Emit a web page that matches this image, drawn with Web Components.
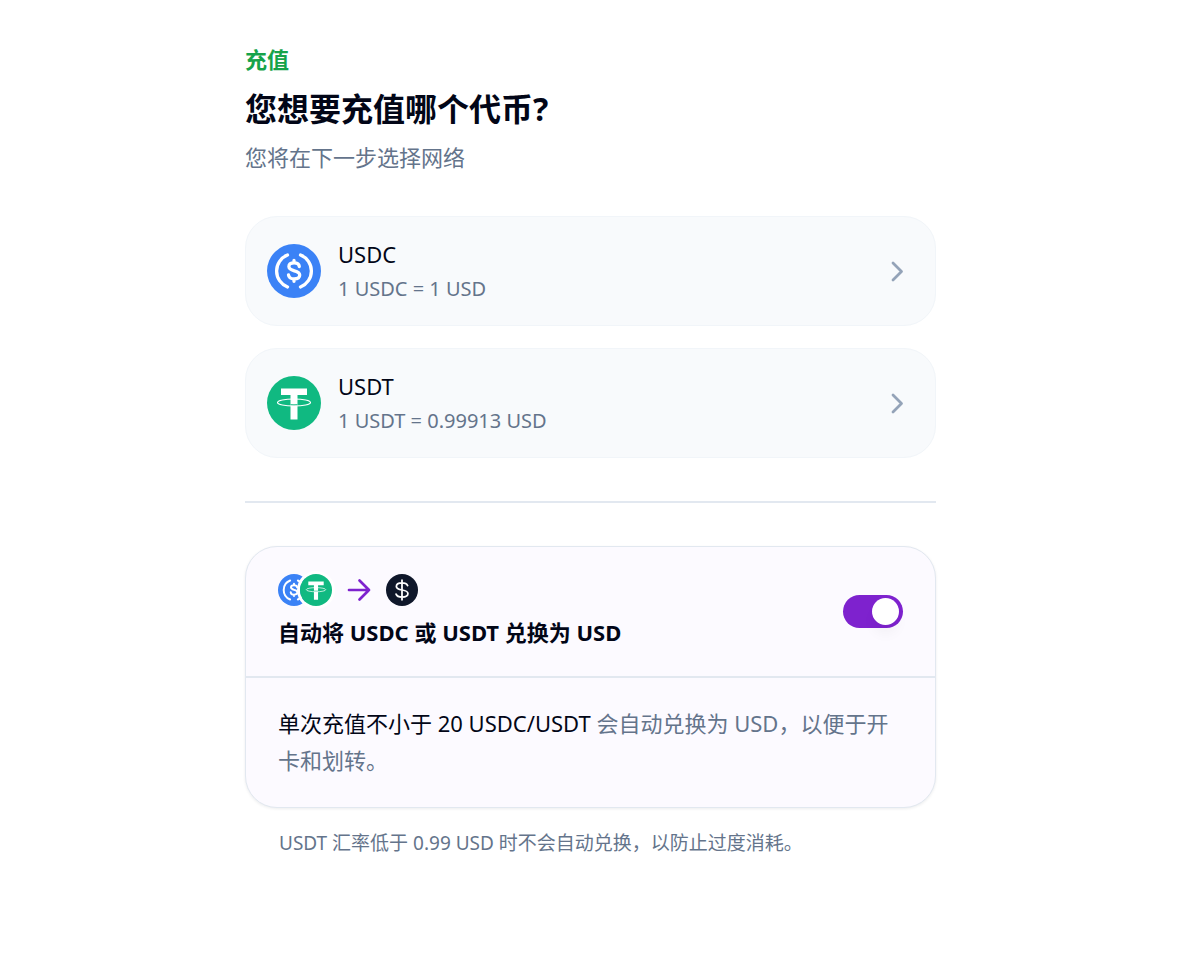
<!DOCTYPE html>
<html lang="zh-CN">
<head>
<meta charset="utf-8">
<meta name="viewport" content="width=device-width, initial-scale=1">
<title>充值</title>
<style>
  :root {
    --ink: #020617;
    --muted: #64748b;
    --line: #e2e8f0;
    --purple: #7e22ce;
  }
  body {
    margin: 0;
    padding-right: 20px;
    background: #fff;
    color: var(--ink);
    font-family: "Noto Sans", "Noto Sans CJK SC", sans-serif;
    font-size: 22px;
    line-height: 32px;
  }
</style>
</head>
<body>
<deposit-page></deposit-page>

<script>
const ICONS = {
  usdc: `
    <circle cx="27" cy="27" r="27" fill="#3b82f6"/>
    <g fill="none" stroke="#fff" stroke-width="3.3" stroke-linecap="round">
      <path d="M20.500 11a17.200 17.200 0 0 0 0 32M33.500 11a17.200 17.200 0 0 1 0 32"/>
      <path d="M32.300 22.500c-.3-2.500-2.300-3.600-5.200-3.600-3.200 0-5.200 1.300-5.200 3.600 0 5.700 10.800 2.900 10.800 8.500 0 2.600-2.200 3.900-5.600 3.900-3.300 0-5.300-1.300-5.600-4M27 16.500v2.400M27 34.900v2.400"/>
    </g>`,
  usdt: `
    <circle cx="27" cy="27" r="27" fill="#10b981"/>
    <path fill="#fff" d="M14 12.500h26v6.500h-9.500v24.500h-7V19H14z"/>
    <ellipse cx="27" cy="26.500" rx="16.500" ry="3.500" fill="none" stroke="#fff" stroke-width="1.2"/>
    <path d="M23.500 28.700q3.500.3 7 0" fill="none" stroke="#10b981" stroke-width="1"/>`,
  usd: `
    <circle cx="27" cy="27" r="27" fill="#0f172a"/>
    <path d="M36.500 19.500c-1.500-3.300-5-4.500-9.500-4.500-5.500 0-9.500 1.800-9.500 6 0 8.500 19.500 3.500 19.500 12 0 4.300-4.500 6-10 6-5 0-8.800-1.700-10-5M27 10.500v33" fill="none" stroke="#fff" stroke-width="3" stroke-linecap="round"/>`
};

class CoinIcon extends HTMLElement {
  constructor() {
    super();
    this.attachShadow({ mode: 'open' });
  }

  connectedCallback() {
    this.shadowRoot.innerHTML = `
      <style>
        :host {
          display: block;
          flex: none;
          width: var(--coin-size, 54px);
          height: var(--coin-size, 54px);
          border-radius: 50%;
        }
        svg {
          display: block;
          width: 100%;
          height: 100%;
        }
      </style>
      <svg viewBox="0 0 54 54" aria-hidden="true">${ICONS[this.getAttribute('name')]}</svg>
    `;
  }
}

class TokenOption extends HTMLElement {
  constructor() {
    super();
    this.attachShadow({ mode: 'open' });
    this.shadowRoot.innerHTML = `
      <style>
        :host {
          display: block;
        }
        button {
          display: flex;
          align-items: center;
          gap: 17px;
          width: 100%;
          min-height: 110px;
          box-sizing: border-box;
          padding: 20px 21px;
          border: 1px solid #f1f5f9;
          border-radius: 32px;
          background: #f8fafc;
          color: inherit;
          font: inherit;
          text-align: left;
          cursor: pointer;
        }
        .text {
          flex: 1;
        }
        .text span {
          display: block;
        }
        .rate {
          margin-top: 3px;
          color: var(--muted);
          font-size: 20px;
        }
        .chevron {
          flex: none;
          width: 34px;
          height: 34px;
        }
      </style>
      <button type="button">
        <slot name="icon"></slot>
        <span class="text">
          <span><slot></slot></span>
          <span class="rate"><slot name="rate"></slot></span>
        </span>
        <svg class="chevron" viewBox="0 0 34 34" aria-hidden="true">
          <path d="M13 9l8.500 8.500L13 26" fill="none" stroke="#94a3b8" stroke-width="2.800" stroke-linecap="round" stroke-linejoin="round"/>
        </svg>
      </button>
    `;
  }
}

class ToggleSwitch extends HTMLElement {
  constructor() {
    super();
    this.attachShadow({ mode: 'open' });
  }

  connectedCallback() {
    this.shadowRoot.innerHTML = `
      <style>
        :host {
          display: block;
          flex: none;
        }
        input {
          appearance: none;
          display: flex;
          align-items: center;
          width: 60px;
          height: 33px;
          box-sizing: border-box;
          margin: 0;
          padding: 0 4px;
          border-radius: 17px;
          background: var(--line);
          cursor: pointer;
        }
        input::before {
          content: "";
          width: 27px;
          height: 27px;
          border-radius: 50%;
          background: #fff;
          box-shadow: 0 10px 15px -3px rgba(0, 0, 0, 0.06);
        }
        input:checked {
          justify-content: flex-end;
          background: var(--purple);
        }
      </style>
      <input type="checkbox" role="switch" aria-label="${this.getAttribute('label')}" checked>
    `;
  }
}

class ConvertCard extends HTMLElement {
  constructor() {
    super();
    this.attachShadow({ mode: 'open' });
    this.shadowRoot.innerHTML = `
      <style>
        :host {
          display: block;
          border: 1px solid var(--line);
          border-radius: 32px;
          background: #fcfaff;
          box-shadow: 0 1px 3px rgba(15, 23, 42, 0.08);
        }
        .head {
          display: flex;
          align-items: center;
          justify-content: space-between;
          padding: 27px 32px 28px;
          border-bottom: 2px solid var(--line);
        }
        .coins {
          --coin-size: 32px;
          display: flex;
          align-items: center;
          margin-bottom: 10px;
        }
        .over {
          margin-left: -10px;
          box-shadow: 0 0 0 3px #fff;
        }
        .arrow {
          width: 26px;
          height: 26px;
          margin: 0 14px;
        }
        h2 {
          margin: 0;
          font-size: 22px;
          font-weight: 700;
          line-height: 32px;
        }
        p {
          margin: 0;
          padding: 27px 32px 28px;
          color: var(--muted);
          line-height: 37px;
        }
      </style>
      <div class="head">
        <div>
          <div class="coins">
            <coin-icon name="usdc"></coin-icon>
            <coin-icon class="over" name="usdt"></coin-icon>
            <svg class="arrow" viewBox="0 0 26 26" aria-hidden="true">
              <path d="M3 13h20M13.500 3.500L23 13l-9.500 9.500" fill="none" stroke="#7e22ce" stroke-width="2.700" stroke-linecap="round" stroke-linejoin="round"/>
            </svg>
            <coin-icon name="usd"></coin-icon>
          </div>
          <h2><slot name="title"></slot></h2>
        </div>
        <toggle-switch label="自动兑换"></toggle-switch>
      </div>
      <p><slot></slot></p>
    `;
  }
}

class DepositPage extends HTMLElement {
  constructor() {
    super();
    this.attachShadow({ mode: 'open' });
    this.shadowRoot.innerHTML = `
      <style>
        :host {
          display: block;
        }
        main {
          max-width: 691px;
          margin: 0 auto;
          padding: 43px 0;
        }
        .label {
          margin: 0;
          color: #16a34a;
          font-weight: 600;
        }
        h1 {
          margin: 13px 0 11px;
          font-size: 32px;
          font-weight: 700;
          line-height: 42px;
        }
        .hint {
          margin: 0;
          color: var(--muted);
        }
        .tokens {
          display: grid;
          gap: 22px;
          margin-top: 43px;
        }
        hr {
          margin: 43px 0;
          border: 0;
          border-top: 2px solid var(--line);
        }
        .strong {
          color: var(--ink);
        }
        .note {
          margin: 19px 34px 0;
          color: var(--muted);
          font-size: 19px;
        }
      </style>
      <main>
        <p class="label">充值</p>
        <h1>您想要充值哪个代币?</h1>
        <p class="hint">您将在下一步选择网络</p>
        <div class="tokens">
          <token-option>
            <coin-icon slot="icon" name="usdc"></coin-icon>
            USDC
            <span slot="rate">1 USDC = 1 USD</span>
          </token-option>
          <token-option>
            <coin-icon slot="icon" name="usdt"></coin-icon>
            USDT
            <span slot="rate">1 USDT = 0.99913 USD</span>
          </token-option>
        </div>
        <hr>
        <convert-card>
          <span slot="title">自动将 USDC 或 USDT 兑换为 USD</span>
          <span class="strong">单次充值不小于 20 USDC/USDT</span> 会自动兑换为 USD，以便于开卡和划转。
        </convert-card>
        <p class="note">USDT 汇率低于 0.99 USD 时不会自动兑换，以防止过度消耗。</p>
      </main>
    `;
  }
}

customElements.define('coin-icon', CoinIcon);
customElements.define('token-option', TokenOption);
customElements.define('toggle-switch', ToggleSwitch);
customElements.define('convert-card', ConvertCard);
customElements.define('deposit-page', DepositPage);
</script>
</body>
</html>
